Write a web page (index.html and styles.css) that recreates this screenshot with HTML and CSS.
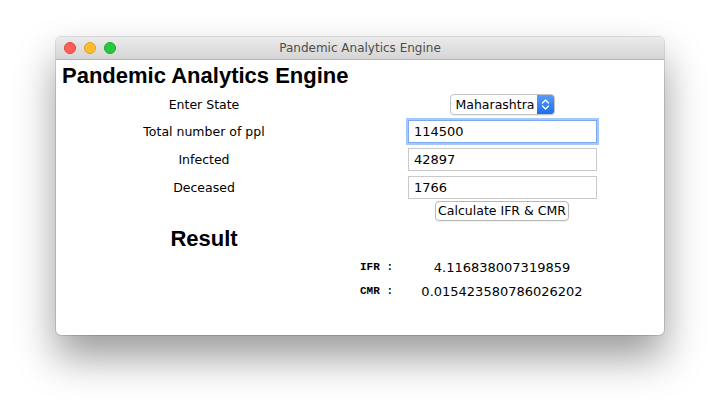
FILE: index.html
```html
<!DOCTYPE html>
<html>
<head>
<meta charset="utf-8">
<link rel="stylesheet" href="styles.css">
</head>
<body>
<div class="window">
  <div class="titlebar">
    <div class="lights">
      <span class="light red"></span>
      <span class="light yellow"></span>
      <span class="light green"></span>
    </div>
    <div class="wtitle">Pandemic Analytics Engine</div>
  </div>
  <div class="content">
    <h1 class="heading">Pandemic Analytics Engine</h1>
    <div class="form">
      <div class="label">Enter State</div>
      <div class="ctrl center">
        <div class="select">
          <span class="select-text">Maharashtra</span>
          <span class="select-arrow">
            <svg width="9" height="13" viewBox="0 0 9 13"><path d="M1.5 5 L4.5 2 L7.5 5 M1.5 8 L4.5 11 L7.5 8" fill="none" stroke="#fff" stroke-width="1.3" stroke-linecap="round" stroke-linejoin="round"/></svg>
          </span>
        </div>
      </div>
      <div class="label">Total number of ppl</div>
      <div class="ctrl"><div class="field focused">114500</div></div>
      <div class="label">Infected</div>
      <div class="ctrl"><div class="field">42897</div></div>
      <div class="label">Deceased</div>
      <div class="ctrl"><div class="field">1766</div></div>
      <div class="ctrl center btnrow"><div class="button">Calculate IFR &amp; CMR</div></div>
    </div>
    <h2 class="result">Result</h2>
    <div class="results">
      <div class="rlabel">IFR :</div>
      <div class="rvalue">4.116838007319859</div>
      <div class="rlabel">CMR :</div>
      <div class="rvalue">0.015423580786026202</div>
    </div>
  </div>
</div>
</body>
</html>
```
FILE: styles.css
```css
html, body {
  margin: 0;
  padding: 0;
  background: #ffffff;
  width: 720px;
  height: 409px;
  overflow: hidden;
}
body {
  font-family: "DejaVu Sans", "Liberation Sans", sans-serif;
  padding-top: 37px;
  box-sizing: border-box;
}
.window {
  margin-left: 56px;
  width: 608px;
  height: 298px;
  border-radius: 5px;
  background: #fff;
  box-shadow: 0 0 0 1px rgba(0,0,0,0.12), 0 22px 40px rgba(0,0,0,0.4);
  overflow: hidden;
  display: flex;
  flex-direction: column;
}
.titlebar {
  height: 22px;
  flex: none;
  background: linear-gradient(#ebebeb, #d5d5d5);
  border-bottom: 1px solid #b4b4b4;
  display: flex;
  align-items: center;
  position: relative;
}
.lights {
  display: flex;
  gap: 8px;
  padding-left: 8px;
}
.light {
  width: 12px;
  height: 12px;
  border-radius: 50%;
  box-sizing: border-box;
}
.red { background: #fe5f57; border: 0.5px solid #e0443e; }
.yellow { background: #febc2e; border: 0.5px solid #dea123; }
.green { background: #28c840; border: 0.5px solid #1aab29; }
.wtitle {
  position: absolute;
  left: 0;
  right: 0;
  text-align: center;
  font-size: 12px;
  color: #4d4d4d;
  top: 4px;
}
.content {
  flex: 1;
  position: relative;
}
.heading {
  margin: 0;
  padding: 3px 0 0 6px;
  font-family: "Liberation Sans", Arial, sans-serif;
  font-weight: bold;
  font-size: 22px;
  line-height: 25px;
  color: #000;
}
.form {
  display: grid;
  grid-template-columns: 296px 55px 190px;
  grid-template-rows: 26px 28px 28px 28px 22px;
  margin-top: 3px;
}
.label {
  grid-column: 1;
  font-size: 12.5px;
  color: #000;
  text-align: center;
  align-self: center;
}
.ctrl {
  grid-column: 3;
  display: flex;
  align-items: center;
}
.center { justify-content: center; }
.btnrow { align-self: start; height: 20px; }
.select {
  width: 105px;
  height: 21px;
  box-sizing: border-box;
  border: 1px solid #c4c4c4;
  border-radius: 4px;
  display: flex;
  align-items: center;
  overflow: hidden;
  background: #fff;
  box-shadow: 0 1px 1px rgba(0,0,0,0.08);
}
.select-text {
  flex: 1;
  font-size: 12.5px;
  padding-left: 5px;
  color: #000;
}
.select-arrow {
  width: 17px;
  height: 100%;
  background: linear-gradient(#5a9cf8, #1c6ff3);
  display: flex;
  align-items: center;
  justify-content: center;
}
.field {
  width: 189px;
  height: 23px;
  box-sizing: border-box;
  border: 1px solid #c9c9c9;
  font-size: 13px;
  line-height: 21px;
  padding-left: 5px;
  color: #000;
  margin-left: 1px;
}
.field.focused {
  border-color: #7aaaf3;
  box-shadow: 0 0 0 2px #a6c8f7;
}
.button {
  width: 134px;
  height: 20px;
  box-sizing: border-box;
  border: 1px solid #b8b8b8;
  border-radius: 4px;
  font-size: 12.5px;
  line-height: 18px;
  text-align: center;
  background: #fff;
  box-shadow: 0 1px 1px rgba(0,0,0,0.06);
}
.result {
  margin: 3px 0 0 0;
  width: 296px;
  text-align: center;
  font-family: "Liberation Sans", Arial, sans-serif;
  font-weight: bold;
  font-size: 22px;
  line-height: 25px;
}
.results {
  display: grid;
  grid-template-columns: 304px 47px 190px;
  grid-auto-rows: 24px;
  margin-top: 4px;
}
.rlabel {
  grid-column: 2;
  font-family: "Liberation Mono", "Courier New", monospace;
  font-weight: bold;
  font-size: 11px;
  align-self: center;
  white-space: pre;
}
.rvalue {
  grid-column: 3;
  text-align: center;
  font-size: 13px;
  align-self: center;
}
```
